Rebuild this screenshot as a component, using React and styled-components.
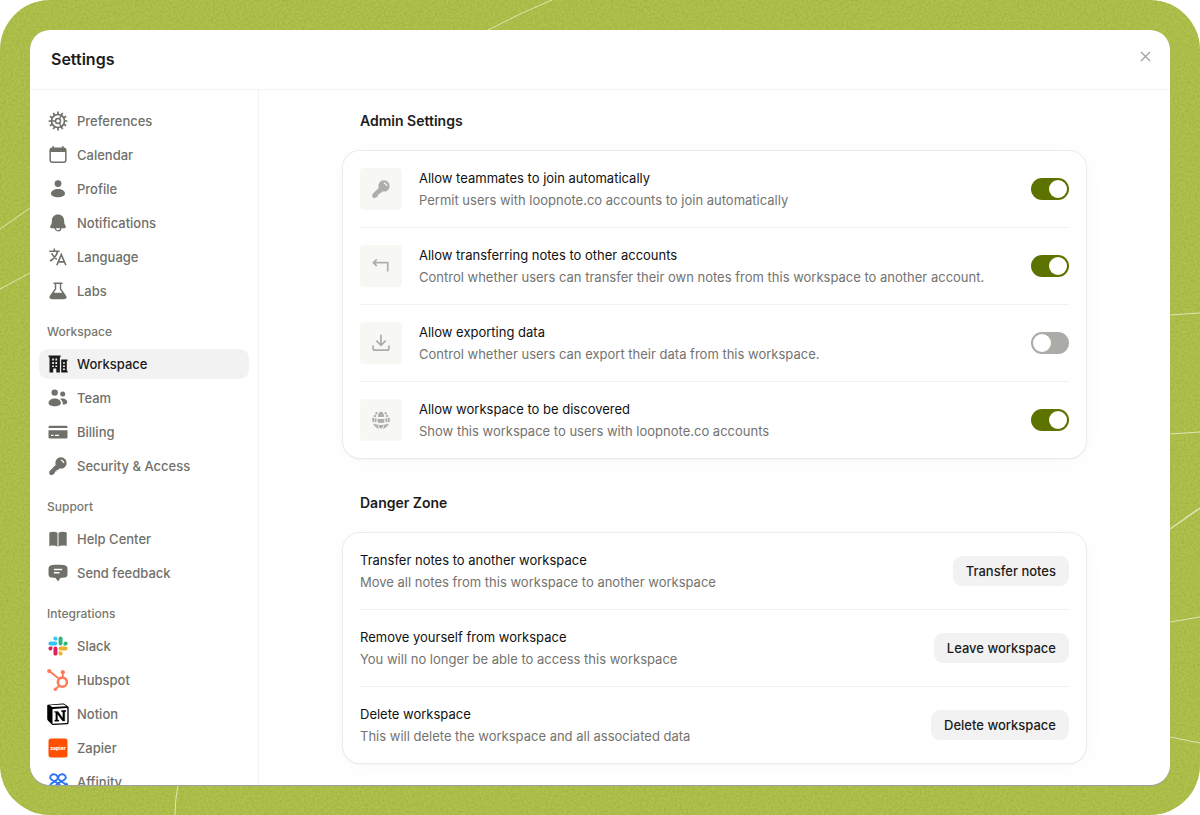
import React, { useState } from 'react';
import styled, { createGlobalStyle } from 'styled-components';

const GlobalStyle = createGlobalStyle`
  * {
    box-sizing: border-box;
  }

  body {
    margin: 0;
    background: #fff;
    font-family: Inter, 'Liberation Sans', sans-serif;
    font-size: 13px;
    color: #1c1c1c;
    -webkit-font-smoothing: antialiased;
  }
`;

const Backdrop = styled.div`
  position: relative;
  height: 100vh;
  padding: 30px;
  border-radius: 50px;
  overflow: hidden;
  background: #b1c14d;
`;

const Texture = styled.svg`
  position: absolute;
  inset: 0;
  width: 100%;
  height: 100%;
`;

const Window = styled.div`
  position: relative;
  height: 100%;
  display: flex;
  flex-direction: column;
  border-radius: 20px;
  overflow: hidden;
  background: #fff;
  box-shadow: 0 1px 1px #9c9fa8;
`;

const Header = styled.header`
  flex: none;
  height: 60px;
  display: flex;
  align-items: center;
  justify-content: space-between;
  padding: 0 17px 2px 21px;
  border-bottom: 1px solid #f3f3f3;
`;

const Title = styled.h1`
  margin: 0;
  font-size: 16px;
  font-weight: 600;
`;

const CloseButton = styled.button`
  display: flex;
  padding: 0;
  margin-bottom: 4px;
  border: none;
  background: none;
  color: #a3a3a0;
  cursor: pointer;
`;

const Body = styled.div`
  flex: 1;
  min-height: 0;
  display: flex;
`;

const Sidebar = styled.nav`
  flex: none;
  width: 229px;
  padding: 16px 9px;
  border-right: 1px solid #f3f3f3;
  overflow-x: hidden;
  overflow-y: auto;
  scrollbar-width: none;
`;

const NavList = styled.ul`
  display: flex;
  flex-direction: column;
  gap: 4px;
  margin: 0;
  padding: 0;
  list-style: none;
`;

const NavHeading = styled.h2`
  display: flex;
  align-items: center;
  height: 43px;
  margin: 0;
  padding: 8px 8px 0;
  font-size: 12px;
  font-weight: 500;
  color: #77776f;
`;

const NavLink = styled.a`
  display: flex;
  align-items: center;
  gap: 9px;
  height: 30px;
  padding: 0 9px;
  border-radius: 9px;
  font-weight: 500;
  text-decoration: none;
  color: ${props => (props.$active ? '#1c1c1c' : '#70706a')};
  background: ${props => (props.$active ? '#f2f2f2' : 'transparent')};

  svg {
    flex: none;
  }
`;

const IconSlot = styled.span`
  flex: none;
  display: flex;
  align-items: center;
  justify-content: center;
  width: 20px;
  height: 20px;
`;

const Content = styled.main`
  flex: 1;
  min-width: 0;
  padding: 0 24px;
  overflow-y: auto;
  scrollbar-width: none;
`;

const Section = styled.section`
  max-width: 743px;
  margin: 0 auto 14px;
`;

const SectionTitle = styled.h2`
  display: flex;
  align-items: center;
  height: 61px;
  margin: 0;
  padding: 0 17px;
  font-size: 14px;
  font-weight: 600;
`;

const Card = styled.div`
  padding: 0 17px;
  border-radius: 17px;
  background: #fff;
  box-shadow: 0 0 0 1px #ececec, 0 1px 2px rgba(0, 0, 0, 0.1), 0 2px 24px rgba(0, 0, 0, 0.03);
`;

const Row = styled.div`
  display: flex;
  align-items: center;
  gap: 17px;
  height: 77px;
  border-bottom: 1px solid #f1f1f1;

  &:last-child {
    height: 76px;
    border-bottom: none;
  }
`;

const Tile = styled.div`
  flex: none;
  display: flex;
  align-items: center;
  justify-content: center;
  width: 42px;
  height: 42px;
  border-radius: 4px;
  background: #f7f8f4;
  color: #adaeaa;
`;

const RowText = styled.div`
  flex: 1;
  min-width: 0;
  line-height: 22px;
`;

const RowTitle = styled.label`
  display: block;
  color: #111;
`;

const RowDescription = styled.div`
  color: #737370;
`;

const Toggle = styled.input`
  appearance: none;
  flex: none;
  width: 38px;
  height: 22px;
  margin: 0;
  padding: 2px;
  border-radius: 11px;
  background: #abaca8;
  cursor: pointer;

  &::before {
    content: '';
    display: block;
    width: 18px;
    height: 18px;
    border-radius: 50%;
    background: #fff;
  }

  &:checked {
    background: #5c7300;
  }

  &:checked::before {
    margin-left: auto;
  }
`;

const ActionButton = styled.button`
  flex: none;
  height: 30px;
  padding: 0 13px;
  border: none;
  border-radius: 9px;
  background: #f2f2f2;
  color: #1c1c1c;
  font-family: inherit;
  font-size: 13px;
  font-weight: 500;
  cursor: pointer;
`;

function Icon({ size = 20, children }) {
  return (
    <svg width={size} height={size} viewBox="0 0 20 20" fill="currentColor" aria-hidden="true">
      {children}
    </svg>
  );
}

const teeth = Array.from({ length: 12 }, (_, i) => i * 30);

const GearIcon = () => (
  <Icon>
    <g fill="none" stroke="currentColor">
      <circle cx="10" cy="10" r="6.500" strokeWidth="1.700" />
      <circle cx="10" cy="10" r="2.500" strokeWidth="1.500" />
      {teeth.map(angle => (
        <path key={angle} d="M10 .6v2.800" strokeWidth="1.700" transform={`rotate(${angle} 10 10)`} />
      ))}
      {[60, 180, 300].map(angle => (
        <path key={angle} d="M12.300 10h4" strokeWidth="1.400" transform={`rotate(${angle} 10 10)`} />
      ))}
    </g>
  </Icon>
);

const CalendarIcon = () => (
  <Icon>
    <path
      fillRule="evenodd"
      d="M4.300 1.200h1.800v1.300h7.800V1.200h1.800v1.300A3 3 0 0 1 18.600 5.500V15a3 3 0 0 1-3 3H4.400a3 3 0 0 1-3-3V5.500a3 3 0 0 1 2.900-3zM2.900 7v8a1.600 1.600 0 0 0 1.600 1.600h11a1.600 1.600 0 0 0 1.600-1.600V7z"
    />
  </Icon>
);

const ProfileIcon = () => (
  <Icon>
    <circle cx="10" cy="4.600" r="3.400" />
    <path d="M3 14.700C3 11.800 6.300 9.900 10 9.900s7 1.900 7 4.800c0 2.200-3.500 3.500-7 3.500s-7-1.300-7-3.500z" />
  </Icon>
);

const BellIcon = () => (
  <Icon>
    <path d="M10 1.400c3.700 0 6 2.500 6.100 5.900.1 3 .4 4.300 1.500 5.600.8 1-.1 2.400-1.300 2.400H3.700c-1.200 0-2.100-1.400-1.300-2.400 1.100-1.300 1.400-2.600 1.500-5.600C4 3.900 6.300 1.400 10 1.400z" />
    <path d="M7.100 14.800a2.900 3 0 0 0 5.800 0" fill="none" stroke="currentColor" strokeWidth="1.300" />
  </Icon>
);

const LanguageIcon = () => (
  <Icon>
    <g fill="none" stroke="currentColor" strokeWidth="1.600">
      <path d="M1.300 4.200h10.200M6.300 1.500v2.700M9.500 4.500C8.700 8.200 6 11.800 2 14M3.800 6.200c.8 2.500 2.700 4.700 5 6" />
      <path d="M8.800 18.200l4.500-10.600 4.600 10.600M10.200 14.900h6.200" />
    </g>
  </Icon>
);

const FlaskIcon = () => (
  <Icon>
    <path
      fillRule="evenodd"
      d="M5.500 1.500h9v1.400h-1.300v4.900l5.100 7.200c.9 1.500-.1 3.200-2.800 3.200h-11c-2.700 0-3.700-1.700-2.800-3.200l5.100-7.200V2.900H5.500zM8.200 2.900v5.400l-2.400 3.500h8.400l-2.400-3.500V2.900z"
    />
  </Icon>
);

const BuildingIcon = () => (
  <Icon>
    <path
      fillRule="evenodd"
      d="M.6 1.500h12v1.800h-.7v15.100H8.300v-3.800H5.200v3.800H1.500V3.300H.6zM4.200 4.400v2.100h1.700V4.400zm3.200 0v2.100h1.700V4.400zM4.200 8v2.100h1.700V8zm3.200 0v2.100h1.700V8zM4.200 11.500v1.600h1.700v-1.600zm3.200 0v1.600h1.700v-1.600z"
    />
    <path
      fillRule="evenodd"
      d="M13.200 5.400h6.300v1.700h-.7v9.600h.8v1.700h-6.400zM15 8.200v1.500h1.900V8.200zm0 3.200v1.500h1.900v-1.500zm0 3.200v1.500h1.900v-1.500z"
    />
  </Icon>
);

const TeamIcon = () => (
  <Icon>
    <circle cx="6.700" cy="4.600" r="3.200" />
    <circle cx="14.700" cy="6" r="2.500" />
    <path d="M.5 15c0-2.700 2.900-4.600 6.200-4.600s6.200 1.900 6.200 4.600c0 2-3 3.300-6.200 3.300S.5 17 .5 15z" />
    <path d="M12 10.900c3.300-1.200 7.300.7 7.300 3.300 0 1.400-1.800 2.400-4.500 2.400.4-2.300-.7-4.400-2.800-5.700z" />
  </Icon>
);

const CardIcon = () => (
  <Icon>
    <path d="M2.100 3.800h15.800c1 0 1.600.6 1.600 1.500v.7H.5v-.7c0-.9.6-1.500 1.600-1.500z" />
    <path
      fillRule="evenodd"
      d="M.5 8.200h19v6.700c0 1-.6 1.600-1.600 1.600H2.100c-1 0-1.600-.6-1.600-1.600zM3 12.800V14h2.600v-1.200zm4 0V14h4v-1.200z"
    />
  </Icon>
);

const KeyIcon = ({ size }) => (
  <Icon size={size}>
    <path
      fillRule="evenodd"
      d="M13 1.200a5.700 5.700 0 1 1-1.500 11.200L10 13.900H8.500v1.600H6.900v1.400l-1.400 1.400c-.9.900-2.900.8-3.700.1-.8-.9-.8-2.700.1-3.600l5.700-5.900A5.700 5.700 0 0 1 13 1.200zM13.100 3.500l-.5 1.100c1.200.4 2.300 1.500 2.700 2.700l1.200-.5c-.5-1.500-1.800-2.800-3.400-3.300z"
    />
  </Icon>
);

const BookIcon = () => (
  <Icon>
    <path d="M1.300 3.400c2.900-1 5.800-1 8.200.3v13.800c-2.400-1.200-5.200-1.200-8.200-.6zM10.500 3.700c2.400-1.300 5.300-1.300 8.200-.3v13.500c-3-.6-5.800-.6-8.200.6z" />
  </Icon>
);

const FeedbackIcon = () => (
  <Icon>
    <path
      fillRule="evenodd"
      d="M3.300 2.200c4.300-.6 9.100-.6 13.400 0C18.700 2.500 19.500 4 19.500 6v4.900c0 2-.9 3.300-2.800 3.600l-4.300.5-2.400 3.400L7.600 15l-4.300-.5C1.400 14.200.5 12.900.5 10.900V6c0-2 .8-3.500 2.800-3.800zM5.900 5.800v1.500h8.300V5.800zm0 3.300v1.500h5.600V9.100z"
    />
  </Icon>
);

const SlackIcon = () => (
  <Icon>
    <g fill="#36c5f0">
      <path d="M7.300.4a2 2 0 1 0 0 4h2v-2a2 2 0 0 0-2-2z" />
      <rect x=".4" y="5.600" width="8.900" height="3.900" rx="1.950" />
    </g>
    <g fill="#2eb67d">
      <path d="M19.600 7.500a2 2 0 1 0-4 0v2h2a2 2 0 0 0 2-2z" />
      <rect x="10.600" y=".4" width="3.900" height="9" rx="1.950" />
    </g>
    <g fill="#ecb22e">
      <path d="M12.600 19.600a2 2 0 1 0 0-4h-2v2a2 2 0 0 0 2 2z" />
      <rect x="10.600" y="10.600" width="9" height="3.900" rx="1.950" />
    </g>
    <g fill="#e01e5a">
      <path d="M.4 12.600a2 2 0 1 0 4 0v-2h-2a2 2 0 0 0-2 2z" />
      <rect x="5.500" y="10.600" width="3.900" height="9" rx="1.950" />
    </g>
  </Icon>
);

const HubspotIcon = () => (
  <Icon size={22}>
    <g fill="none" stroke="#ff7a59">
      <circle cx="14" cy="12" r="4.100" strokeWidth="2.400" />
      <path d="M2 1.800l9 7M14.400 3.500v4.400M11.200 15l-3.300 3.300" strokeWidth="1.700" />
    </g>
    <g fill="#ff7a59">
      <circle cx="2" cy="1.900" r="1.900" />
      <circle cx="14.400" cy="2.900" r="1.900" />
      <circle cx="7.600" cy="18.400" r="1.600" />
    </g>
  </Icon>
);

const NotionIcon = () => (
  <Icon size={22}>
    <path
      d="M1 1.500L14.300.5c1 0 1.600.2 2.300.8l2.500 1.900c.5.4.6.7.6 1.500v12.800c0 1.200-.6 1.800-1.800 1.900l-11.700.6c-1 .1-1.600-.2-2.200-1L1 16.200c-.6-.7-.8-1.200-.8-2V2.500c0-.6.300-.9.800-1z"
      fill="#000"
    />
    <path d="M2.400 2.100l11.800-.8c.7 0 1 .1 1.500.4l1.800 1.300-12 .7c-.7 0-1-.1-1.500-.5z" fill="#fff" />
    <path d="M5.400 5.400l12.400-.8c.5 0 .7.2.7.7v12c0 .6-.2.9-.8.9l-11.900.7c-.6 0-.8-.2-.8-.8V6.200c0-.5.100-.8.400-.8z" fill="#fff" />
    <path
      d="M7.200 7.700h2.800l4.400 6.100V8.200l-1.200-.3v-1l3.900-.2v1l-1 .4v8.300h-1.900L9.500 10v5.200l1.300.3v1l-3.800.2v-1l1-.4V8.700l-1.100-.2v-.8z"
      fill="#000"
      stroke="#000"
      strokeWidth=".3"
    />
  </Icon>
);

const ZapierIcon = () => (
  <Icon>
    <rect x=".5" y=".5" width="19" height="19" rx="2.500" fill="#ff4f00" />
    <text
      x="10"
      y="11.500"
      textAnchor="middle"
      fontFamily="Inter, sans-serif"
      fontSize="5"
      fontWeight="800"
      fill="#fff"
    >
      zapier
    </text>
  </Icon>
);

const AffinityIcon = () => (
  <Icon>
    <g fill="none" stroke="#2a73f5" strokeWidth="1.900">
      <path d="M2.200 13.900c0-2.900 4-3.500 6.700-6.200 1.900-2 .300-5.500-3-5.500-2 0-3.700 1.400-3.700 3.400 0 4.200 8.800 3.800 10.200 8.500.6 2 2.200 3.500 3.800 3.500a3.300 3.300 0 0 0 1.600-6.200" />
      <path d="M17.800 13.900c0-2.900-4-3.500-6.700-6.200-1.900-2-.3-5.500 3-5.500 2 0 3.700 1.400 3.700 3.400 0 4.200-8.800 3.800-10.200 8.500-.6 2-2.200 3.500-3.800 3.500a3.300 3.300 0 0 1-1.600-3.700" />
    </g>
  </Icon>
);

const ReplyIcon = () => (
  <Icon size={18}>
    <path d="M5.300 2.500L1.600 6.300l3.700 3.800M1.800 6.300h15.700v9.800" fill="none" stroke="currentColor" strokeWidth="1.900" />
  </Icon>
);

const DownloadIcon = () => (
  <Icon size={18}>
    <path
      d="M10 .8v11.400M4.800 7.400L10 12.600l5.200-5.200M1.200 12.800v2.900c0 1.300.9 2.200 2.200 2.200h13.200c1.300 0 2.200-.9 2.200-2.200v-2.900"
      fill="none"
      stroke="currentColor"
      strokeWidth="1.900"
    />
  </Icon>
);

const GlobeIcon = () => (
  <Icon size={18}>
    <path d="M6.400 6.400C6.900 3 8.300.6 10 .6s3.100 2.400 3.600 5.800c-2.400.5-4.800.5-7.200 0zM6.200 8.600c2.500.5 5.100.5 7.600 0 .1 1.500 0 2.900-.2 4.300-2.400.5-4.800.5-7.200 0-.2-1.400-.3-2.800-.2-4.300zM7 15.300c2 .3 4 .3 6 0-.6 2.500-1.700 4.100-3 4.100s-2.400-1.600-3-4.100z" />
    <g fill="none" stroke="currentColor" strokeWidth="2">
      <path d="M2.100 5.100l2.500.8M5.900 1.700L3.800 3.400M17.900 5.100l-2.500.8M14.100 1.700l2.100 1.700" />
      <path d="M1.600 7.600c-.4 1.600-.4 3.200 0 4.600M4.100 8.200c-.2 1.400-.2 2.800 0 4.200M18.400 7.600c.4 1.600.4 3.200 0 4.600M15.900 8.200c.2 1.400.2 2.800 0 4.200" />
      <path d="M2.300 14.300c.8 1.500 2 2.800 3.700 3.700l-.9-3M17.700 14.300c-.8 1.500-2 2.800-3.700 3.700l.9-3" />
    </g>
  </Icon>
);

const navGroups = [
  {
    items: [
      { label: 'Preferences', icon: GearIcon },
      { label: 'Calendar', icon: CalendarIcon },
      { label: 'Profile', icon: ProfileIcon },
      { label: 'Notifications', icon: BellIcon },
      { label: 'Language', icon: LanguageIcon },
      { label: 'Labs', icon: FlaskIcon }
    ]
  },
  {
    heading: 'Workspace',
    items: [
      { label: 'Workspace', icon: BuildingIcon, active: true },
      { label: 'Team', icon: TeamIcon },
      { label: 'Billing', icon: CardIcon },
      { label: 'Security & Access', icon: KeyIcon }
    ]
  },
  {
    heading: 'Support',
    items: [
      { label: 'Help Center', icon: BookIcon },
      { label: 'Send feedback', icon: FeedbackIcon }
    ]
  },
  {
    heading: 'Integrations',
    items: [
      { label: 'Slack', icon: SlackIcon },
      { label: 'Hubspot', icon: HubspotIcon },
      { label: 'Notion', icon: NotionIcon },
      { label: 'Zapier', icon: ZapierIcon },
      { label: 'Affinity', icon: AffinityIcon }
    ]
  }
];

const adminSettings = [
  {
    id: 'join',
    icon: KeyIcon,
    title: 'Allow teammates to join automatically',
    description: 'Permit users with loopnote.co accounts to join automatically'
  },
  {
    id: 'transfer',
    icon: ReplyIcon,
    title: 'Allow transferring notes to other accounts',
    description: 'Control whether users can transfer their own notes from this workspace to another account.'
  },
  {
    id: 'export',
    icon: DownloadIcon,
    title: 'Allow exporting data',
    description: 'Control whether users can export their data from this workspace.'
  },
  {
    id: 'discover',
    icon: GlobeIcon,
    title: 'Allow workspace to be discovered',
    description: 'Show this workspace to users with loopnote.co accounts'
  }
];

const dangerActions = [
  {
    title: 'Transfer notes to another workspace',
    description: 'Move all notes from this workspace to another workspace',
    action: 'Transfer notes'
  },
  {
    title: 'Remove yourself from workspace',
    description: 'You will no longer be able to access this workspace',
    action: 'Leave workspace'
  },
  {
    title: 'Delete workspace',
    description: 'This will delete the workspace and all associated data',
    action: 'Delete workspace'
  }
];

function BackdropTexture() {
  return (
    <Texture viewBox="0 0 1200 815" preserveAspectRatio="none" aria-hidden="true">
      <filter id="grain" x="0" y="0" width="100%" height="100%" colorInterpolationFilters="sRGB">
        <feTurbulence type="fractalNoise" baseFrequency="0.45" numOctaves="2" />
        <feColorMatrix values="0 0 0 0 0.6  0 0 0 0 0.67  0 0 0 0 0.22  1.3 0 0 0 -0.45" />
      </filter>
      <rect width="1200" height="815" filter="url(#grain)" />
      <g fill="none" stroke="#dfe5b4" strokeWidth="1">
        <path d="M0 229L30 208M0 289L30 273M488 30Q520 13 552 0" />
        <path d="M178 785Q175 800 175 815M1170 315L1200 313M1170 434L1200 432" />
        <path d="M1170 622L1200 617M1170 737L1200 743" />
        <path d="M1170 529L1200 508" strokeWidth="1.500" />
      </g>
    </Texture>
  );
}

function App() {
  const [enabled, setEnabled] = useState({
    join: true,
    transfer: true,
    export: false,
    discover: true
  });

  const toggle = (id) => {
    setEnabled({ ...enabled, [id]: !enabled[id] });
  };

  return (
    <Backdrop>
      <GlobalStyle />
      <BackdropTexture />
      <Window>
        <Header>
          <Title>Settings</Title>
          <CloseButton aria-label="Close">
            <svg width="15" height="15" viewBox="0 0 15 15" fill="none" stroke="currentColor" strokeWidth="1.400">
              <path d="M3 3l9 9M12 3l-9 9" />
            </svg>
          </CloseButton>
        </Header>
        <Body>
          <Sidebar>
            {navGroups.map((group, index) => (
              <React.Fragment key={index}>
                {group.heading && <NavHeading>{group.heading}</NavHeading>}
                <NavList>
                  {group.items.map(({ label, icon: NavIcon, active }) => (
                    <li key={label}>
                      <NavLink href="#" $active={active} aria-current={active ? 'page' : undefined}>
                        <IconSlot>
                          <NavIcon />
                        </IconSlot>
                        {label}
                      </NavLink>
                    </li>
                  ))}
                </NavList>
              </React.Fragment>
            ))}
          </Sidebar>
          <Content>
            <Section>
              <SectionTitle>Admin Settings</SectionTitle>
              <Card>
                {adminSettings.map(({ id, icon: RowIcon, title, description }) => (
                  <Row key={id}>
                    <Tile>
                      <RowIcon size={20} />
                    </Tile>
                    <RowText>
                      <RowTitle htmlFor={id}>{title}</RowTitle>
                      <RowDescription>{description}</RowDescription>
                    </RowText>
                    <Toggle
                      id={id}
                      type="checkbox"
                      role="switch"
                      checked={enabled[id]}
                      onChange={() => toggle(id)}
                    />
                  </Row>
                ))}
              </Card>
            </Section>
            <Section>
              <SectionTitle>Danger Zone</SectionTitle>
              <Card>
                {dangerActions.map(({ title, description, action }) => (
                  <Row key={title}>
                    <RowText>
                      <RowTitle as="div">{title}</RowTitle>
                      <RowDescription>{description}</RowDescription>
                    </RowText>
                    <ActionButton>{action}</ActionButton>
                  </Row>
                ))}
              </Card>
            </Section>
          </Content>
        </Body>
      </Window>
    </Backdrop>
  );
}

export default App;
